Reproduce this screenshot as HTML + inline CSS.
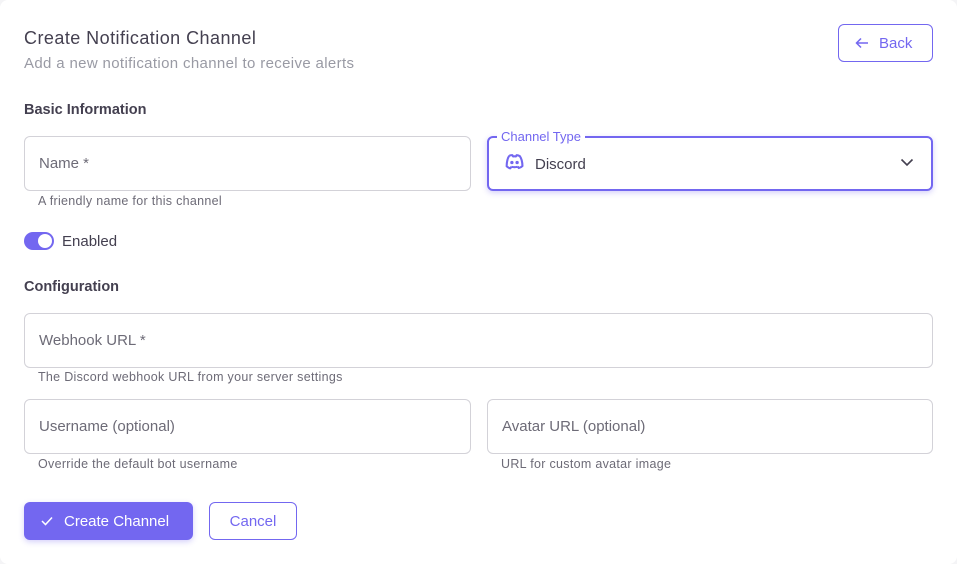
<!DOCTYPE html>
<html><head><style>
*{box-sizing:border-box;margin:0;padding:0}
body{width:957px;height:564px;background:#f4f4f6;font-family:"Liberation Sans",sans-serif;color:#444050;position:relative;overflow:hidden}
.card{position:absolute;left:0;top:0;width:957px;height:564px;background:#fff;border-radius:8px}
.a{position:absolute}
.in{position:absolute;border:1px solid #d3d2d8;border-radius:6px;height:55px;font-size:15px;color:#6d6b77;padding-left:14px;line-height:54px}
.help{position:absolute;font-size:12.5px;color:#6d6b77;letter-spacing:.3px}
h2{font-size:14.5px;font-weight:bold;color:#444050}
</style></head><body><div class="card">
<div class="a" style="left:24px;top:28px;font-size:18px;color:#444050;letter-spacing:.45px">Create Notification Channel</div>
<div class="a" style="left:24px;top:55px;font-size:15px;color:#999aa4;letter-spacing:.35px">Add a new notification channel to receive alerts</div>
<div class="a" style="left:838px;top:24px;width:95px;height:38px;border:1px solid #7367f0;border-radius:6px;color:#7367f0;font-size:15px;line-height:37px;padding-left:40px">Back
<svg class="a" style="left:16px;top:12px" width="14" height="12" viewBox="0 0 14 12"><path d="M13 6H2M6 1.5 1.5 6 6 10.5" stroke="#7367f0" stroke-width="1.5" fill="none"/></svg></div>
<h2 class="a" style="left:24px;top:102px">Basic Information</h2>
<div class="in" style="left:24px;top:136px;width:447px">Name *</div>
<div class="help" style="left:38px;top:194px">A friendly name for this channel</div>
<div class="a" style="left:487px;top:136px;width:446px;height:55px;border:2px solid #7367f0;border-radius:6px;box-shadow:0 2px 6px rgba(115,103,240,.3)"></div>
<div class="a" style="left:497px;top:129px;background:#fff;padding:0 4px;font-size:13px;color:#7367f0">Channel Type</div>
<svg class="a" style="left:503px;top:153px" width="23" height="19" viewBox="0 0 22 18"><path d="M6 2.5Q8 1.8 9 2l.6 1.2Q11 3 12.4 3.2L13 2q1.5.1 3 .8 2.5 3.5 2.6 9.5-1.5 1.5-3.5 2l-1-1.6M14 13q-3 1-6 0m0 0-1 1.6q-2-.5-3.5-2Q3.6 6 6 2.5" stroke="#7367f0" stroke-width="2" fill="none" stroke-linejoin="round"/><circle cx="8.5" cy="9" r="1.6" fill="#7367f0"/><circle cx="13.5" cy="9" r="1.6" fill="#7367f0"/></svg>
<div class="a" style="left:535px;top:156px;font-size:15px;color:#444050">Discord</div>
<svg class="a" style="left:900px;top:158px" width="14" height="9" viewBox="0 0 14 9"><path d="M1.5 1.5 7 7l5.5-5.5" stroke="#444050" stroke-width="1.6" fill="none"/></svg>
<div class="a" style="left:24px;top:232px;width:30px;height:18px;border-radius:9px;background:#7367f0"><div class="a" style="left:14px;top:2px;width:14px;height:14px;border-radius:50%;background:#fff"></div></div>
<div class="a" style="left:62px;top:233px;font-size:15px;color:#444050">Enabled</div>
<h2 class="a" style="left:24px;top:279px">Configuration</h2>
<div class="in" style="left:24px;top:313px;width:909px">Webhook URL *</div>
<div class="help" style="left:38px;top:370px">The Discord webhook URL from your server settings</div>
<div class="in" style="left:24px;top:399px;width:447px">Username (optional)</div>
<div class="help" style="left:38px;top:457px">Override the default bot username</div>
<div class="in" style="left:487px;top:399px;width:446px">Avatar URL (optional)</div>
<div class="help" style="left:501px;top:457px">URL for custom avatar image</div>
<div class="a" style="left:24px;top:502px;width:169px;height:38px;background:#7367f0;border-radius:6px;color:#fff;font-size:15px;line-height:39px;padding-left:40px;box-shadow:0 2px 6px rgba(115,103,240,.3)">Create Channel
<svg class="a" style="left:17px;top:14px" width="12" height="10" viewBox="0 0 12 10"><path d="M1 5l3.5 3.5L11 1.5" stroke="#fff" stroke-width="1.5" fill="none"/></svg></div>
<div class="a" style="left:209px;top:502px;width:88px;height:38px;border:1px solid #7367f0;border-radius:6px;color:#7367f0;font-size:15px;line-height:37px;text-align:center">Cancel</div>
</div></body></html>
